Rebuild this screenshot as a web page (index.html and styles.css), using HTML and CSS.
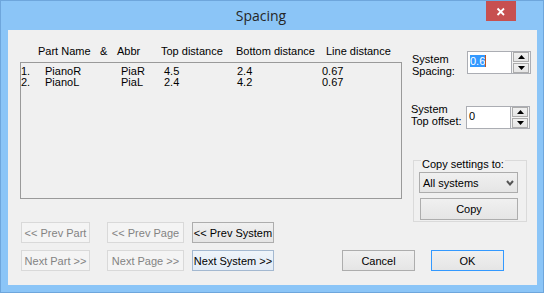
FILE: index.html
```html
<!DOCTYPE html>
<html>
<head>
<meta charset="utf-8">
<link rel="stylesheet" href="styles.css">
</head>
<body>
<div class="window">
  <div class="titlebar">
    <span class="title">Spacing</span>
    <div class="close">
      <svg width="30" height="20" viewBox="0 0 30 20"><path d="M11.5 7.5 L18 14 M18 7.5 L11.5 14" stroke="#fff" stroke-width="1.8" fill="none"/></svg>
    </div>
  </div>
  <div class="client">
    <div class="top">
      <div class="left">
        <div class="thead">
          <span>Part Name</span><span>&amp;</span><span>Abbr</span><span>Top distance</span><span>Bottom distance</span><span>Line distance</span>
        </div>
        <div class="list">
          <div class="row"><span>1.</span><span>PianoR</span><span>PiaR</span><span>4.5</span><span>2.4</span><span>0.67</span></div>
          <div class="row"><span>2.</span><span>PianoL</span><span>PiaL</span><span>2.4</span><span>4.2</span><span>0.67</span></div>
        </div>
      </div>
      <div class="right">
        <div class="field f1">
          <div class="flabel">System<br>Spacing:</div>
          <div class="spin">
            <div class="edit"><span class="sel">0.6</span><span class="caret"></span></div>
            <div class="spinbtns">
              <div class="sbtn"><svg width="7" height="4" viewBox="0 0 7 4"><polygon points="0,4 7,4 3.5,0" fill="#000"/></svg></div>
              <div class="sbtn"><svg width="7" height="4" viewBox="0 0 7 4"><polygon points="0,0 7,0 3.5,4" fill="#000"/></svg></div>
            </div>
          </div>
        </div>
        <div class="field f2">
          <div class="flabel">System<br>Top offset:</div>
          <div class="spin">
            <div class="edit">0</div>
            <div class="spinbtns">
              <div class="sbtn"><svg width="7" height="4" viewBox="0 0 7 4"><polygon points="0,4 7,4 3.5,0" fill="#000"/></svg></div>
              <div class="sbtn"><svg width="7" height="4" viewBox="0 0 7 4"><polygon points="0,0 7,0 3.5,4" fill="#000"/></svg></div>
            </div>
          </div>
        </div>
        <div class="group">
          <div class="glabel"><span>Copy settings to:</span></div>
          <div class="select"><span>All systems</span><svg width="8" height="6" viewBox="0 0 8 6"><path d="M1 1 L4 4.5 L7 1" stroke="#555" stroke-width="2" fill="none"/></svg></div>
          <button class="btn copy">Copy</button>
        </div>
      </div>
    </div>
    <div class="bottom">
      <div class="nav">
        <button class="btn dis w1">&lt;&lt; Prev Part</button>
        <button class="btn dis w2">&lt;&lt; Prev Page</button>
        <button class="btn w3">&lt;&lt; Prev System</button>
        <button class="btn dis w1">Next Part &gt;&gt;</button>
        <button class="btn dis w2">Next Page &gt;&gt;</button>
        <button class="btn hot w3">Next System &gt;&gt;</button>
      </div>
      <div class="actions">
        <button class="btn act">Cancel</button>
        <button class="btn act ok">OK</button>
      </div>
    </div>
  </div>
</div>
</body>
</html>
```
FILE: styles.css
```css
html, body {
  margin: 0;
  padding: 0;
}
body {
  font-family: "Liberation Sans", Arial, sans-serif;
  font-size: 11px;
  color: #000;
}
.window {
  position: relative;
  width: 544px;
  height: 293px;
  box-sizing: border-box;
  border: 1px solid #6ea6dc;
  background: #8bc5f7;
}
.titlebar {
  height: 29px;
  display: flex;
  justify-content: center;
  padding-right: 22px;
}
.title {
  font-family: "Open Sans", "Noto Sans", sans-serif;
  font-size: 14px;
  line-height: 29px;
  color: #262626;
}
.close {
  position: absolute;
  top: 0;
  right: 27px;
  width: 30px;
  height: 20px;
  background: #c75050;
}
.close svg { display: block; }
.client {
  margin-left: 7px;
  width: 529px;
  height: 255px;
  background: #f0f0f0;
  display: flex;
  flex-direction: column;
}
.top {
  display: flex;
  height: 192px;
}
.left {
  margin-left: 12px;
  width: 382px;
}
.thead {
  height: 32px;
  box-sizing: border-box;
  padding-top: 15px;
  padding-left: 18px;
  line-height: 13px;
  display: grid;
  grid-template-columns: 62px 17px 44px 75px 90px auto;
  white-space: nowrap;
}
.list {
  height: 137px;
  box-sizing: border-box;
  border: 1px solid #9a9a9a;
  padding-top: 3px;
}
.row {
  display: grid;
  grid-template-columns: 24px 76px 43px 73px 85px auto;
  line-height: 11px;
  height: 11px;
  white-space: nowrap;
}
.right {
  margin-left: 9px;
  display: flex;
  flex-direction: column;
}
.field {
  display: flex;
  align-items: flex-start;
}
.f1 { padding-top: 21px; }
.f1 .flabel { margin-left: 1px; width: 55px; padding-top: 2px; }
.f2 { margin-top: 26px; }
.f2 .flabel { width: 55px; }
.f2 .spin { margin-top: 3px; }
.flabel {
  line-height: 12px;
  white-space: nowrap;
}
.spin {
  display: flex;
  width: 64px;
  height: 23px;
  box-sizing: border-box;
  border: 1px solid #abadb3;
  background: #fff;
}
.edit {
  width: 44px;
  box-sizing: border-box;
  border-right: 1px solid #abadb3;
  padding: 3px 0 0 2px;
  line-height: 12px;
  white-space: nowrap;
}
.sel {
  background: #3399ff;
  color: #fff;
}
.caret {
  display: inline-block;
  width: 1px;
  height: 12px;
  background: #c0561d;
  vertical-align: top;
}
.spinbtns {
  width: 18px;
  box-sizing: border-box;
  padding: 0 1px;
  display: flex;
  flex-direction: column;
  gap: 1px;
  background: #f4f4f4;
}
.sbtn {
  height: 10px;
  box-sizing: border-box;
  border: 1px solid #acacac;
  background: linear-gradient(#f0f0f0, #e5e5e5);
  display: flex;
  align-items: center;
  justify-content: center;
}
.sbtn svg { display: block; }
.group {
  margin-top: 31px;
  margin-left: 2px;
  width: 114px;
  height: 66px;
  box-sizing: border-box;
  border: 1px solid #dadada;
}
.glabel {
  margin-top: -3px;
  height: 12px;
  line-height: 12px;
  padding-left: 7px;
}
.glabel span {
  background: #f0f0f0;
  padding: 0 1px;
}
.select {
  margin-top: 2px;
  margin-left: 5px;
  width: 99px;
  height: 21px;
  box-sizing: border-box;
  border: 1px solid #acacac;
  background: linear-gradient(#f0f0f0, #e5e5e5);
  padding: 0 3px;
  display: flex;
  align-items: center;
  justify-content: space-between;
}
.select svg { display: block; }
.btn {
  font-family: "Liberation Sans", Arial, sans-serif;
  font-size: 11px;
  color: #000;
  box-sizing: border-box;
  height: 21px;
  padding: 0;
  margin: 0;
  border: 1px solid #adadad;
  background: linear-gradient(#f0f0f0, #e5e5e5);
  white-space: nowrap;
}
.copy {
  display: block;
  margin-top: 5px;
  margin-left: 6px;
  width: 98px;
  height: 22px;
}
.bottom {
  display: flex;
  align-items: flex-end;
  padding-left: 13px;
}
.nav {
  display: grid;
  grid-template-columns: 69px 94px 90px;
  grid-template-rows: 21px 21px;
  row-gap: 7px;
}
.w1 { width: 69px; }
.w2 { width: 77px; justify-self: end; }
.w3 { width: 82px; justify-self: end; }
.dis {
  color: #838383;
  border-color: #d9d9d9;
  background: #f4f4f4;
}
.hot {
  border-color: #a3b8d0;
  background: linear-gradient(#eef4fa, #e3ecf6);
}
.actions {
  display: flex;
  gap: 16px;
  margin-left: 68px;
}
.act { width: 73px; }
.ok { border-color: #3399ff; }
```
